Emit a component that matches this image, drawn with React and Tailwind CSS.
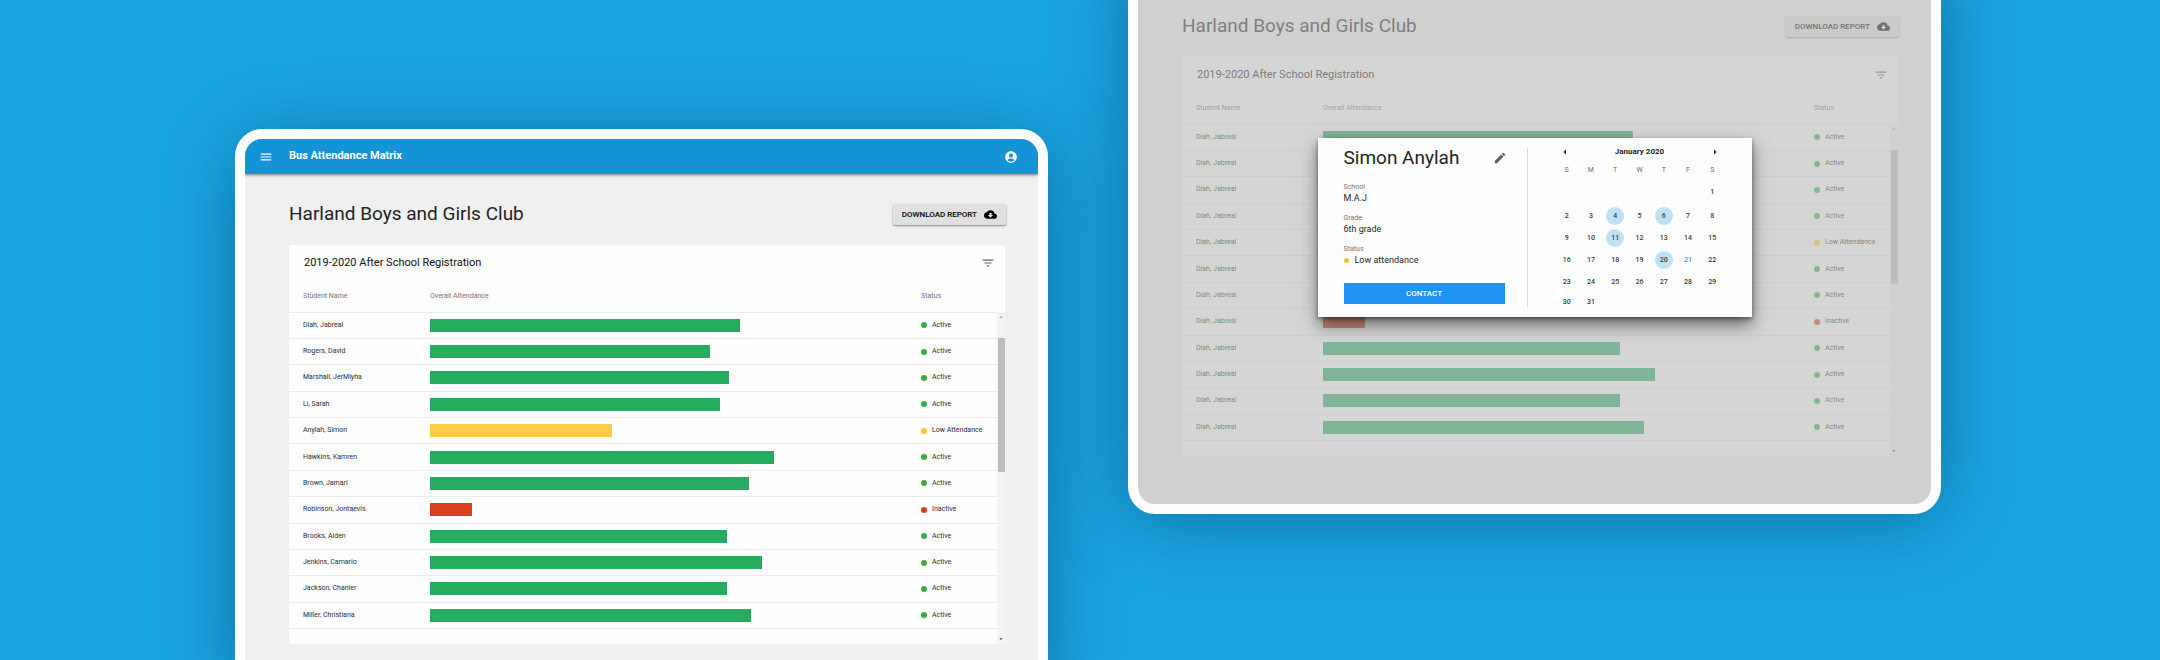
import { MdMenu, MdAccountCircle, MdCloudDownload, MdFilterList, MdEdit, MdArrowDropUp, MdArrowDropDown, MdArrowLeft, MdArrowRight } from "react-icons/md";

const STATUS = {
  Active: { bar: "bg-[#26ac5f]", dot: "bg-[#34b043]" },
  "Low Attendance": { bar: "bg-[#fdcd4a]", dot: "bg-[#fbc536]" },
  Inactive: { bar: "bg-[#d9401c]", dot: "bg-[#dc3c1e]" },
};

const BAR_SCALE = 491;

const STUDENTS = [
  { name: "Diah, Jabreal", value: 310, status: "Active" },
  { name: "Rogers, David", value: 280, status: "Active" },
  { name: "Marshall, JerMiyha", value: 299, status: "Active" },
  { name: "Li, Sarah", value: 290, status: "Active" },
  { name: "Anylah, Simon", value: 182, status: "Low Attendance" },
  { name: "Hawkins, Kamren", value: 344, status: "Active" },
  { name: "Brown, Jamari", value: 319, status: "Active" },
  { name: "Robinson, Jontaevis", value: 42, status: "Inactive" },
  { name: "Brooks, Aiden", value: 297, status: "Active" },
  { name: "Jenkins, Camario", value: 332, status: "Active" },
  { name: "Jackson, Chanler", value: 297, status: "Active" },
  { name: "Miller, Christiana", value: 321, status: "Active" },
];

const PLACEHOLDER_STUDENTS = STUDENTS.map((s) => ({ ...s, name: "Diah, Jabreal" }));

function AppBar() {
  return (
    <header className="relative flex h-[35px] shrink-0 items-center bg-[#1493d6] pl-[14px] pr-5 text-white shadow-[0_1px_3px_rgba(0,0,0,0.5)]">
      <button type="button" aria-label="Menu" className="w-[30px]">
        <MdMenu size={14} />
      </button>
      <h1 className="flex-1 text-[11px] font-bold">Bus Attendance Matrix</h1>
      <button type="button" aria-label="Account">
        <MdAccountCircle size={14} />
      </button>
    </header>
  );
}

function Scrollbar() {
  return (
    <div aria-hidden="true" className="mt-[31px] flex w-2 flex-col items-center bg-[#f3f3f3]">
      <div className="flex h-[26px] justify-center pt-px text-[#8a8a8a]">
        <MdArrowDropUp size={8} />
      </div>
      <div className="h-[134px] w-[7px] bg-[#bdbdbd]" />
      <div className="mt-auto pb-px text-[#333]">
        <MdArrowDropDown size={8} />
      </div>
    </div>
  );
}

function StudentTable({ students }) {
  return (
    <table className="h-[348px] flex-1 table-fixed border-collapse text-left text-[7px] leading-[9px] text-[#2d2d2d]">
      <thead>
        <tr className="h-[31px] border-b border-[#ebebeb] text-[#757575]">
          <th className="w-[141px] pl-[14px] font-normal">Student Name</th>
          <th className="font-normal">Overall Attendance</th>
          <th className="w-[76px] font-normal">Status</th>
        </tr>
      </thead>
      <tbody>
        {students.map((s, i) => (
          <tr key={i} className="border-b border-[#ebebeb]">
            <td className="pl-[14px]">{s.name}</td>
            <td>
              <div
                className={`h-[13px] ${STATUS[s.status].bar}`}
                style={{ width: `${(s.value / BAR_SCALE) * 100}%` }}
              />
            </td>
            <td>
              <span className="flex items-center gap-[5px] whitespace-nowrap">
                <span className={`size-[6px] rounded-full ${STATUS[s.status].dot}`} />
                {s.status}
              </span>
            </td>
          </tr>
        ))}
      </tbody>
    </table>
  );
}

function Dashboard({ students, appBar }) {
  return (
    <>
      {appBar && <AppBar />}
      <main className={`bg-[#f0f0f0] pb-12 pl-11 pr-8 ${appBar ? "pt-[30px]" : "pt-[65px]"}`}>
        <div className="flex h-[21px] items-center justify-between">
          <h2 className="text-[19px] text-[#1f1f1f]">Harland Boys and Girls Club</h2>
          <button
            type="button"
            className="flex h-[21px] items-center gap-[7px] rounded-[2px] bg-[#e0e0e0] px-[9px] text-[8px] font-medium text-black shadow-[0_1px_2px_rgba(0,0,0,0.45)]"
          >
            DOWNLOAD REPORT
            <MdCloudDownload size={13} />
          </button>
        </div>
        <section className="mr-px mt-5 bg-[#fdfdfd]">
          <div className="flex h-9 items-center justify-between pl-[15px] pr-[10px]">
            <h3 className="text-[11px] text-[#111]">2019-2020 After School Registration</h3>
            <button type="button" aria-label="Filter" className="text-[#5f5f5f]">
              <MdFilterList size={14} />
            </button>
          </div>
          <div className="flex">
            <div className="flex flex-1 pb-[15px]">
              <StudentTable students={students} />
            </div>
            <Scrollbar />
          </div>
        </section>
      </main>
    </>
  );
}

function Device({ className = "", children }) {
  return (
    <div
      className={`rounded-[27px] bg-[#fefefe] p-[10px] shadow-[0_8px_80px_rgba(0,40,70,0.42)] ${className}`}
    >
      <div className="relative overflow-hidden rounded-[17px]">{children}</div>
    </div>
  );
}

const WEEKS = [
  ["", "", "", "", "", "", 1],
  [2, 3, 4, 5, 6, 7, 8],
  [9, 10, 11, 12, 13, 14, 15],
  [16, 17, 18, 19, 20, 21, 22],
  [23, 24, 25, 26, 27, 28, 29],
  [30, 31, "", "", "", "", ""],
];
const ROW_HEIGHTS = ["h-[26px]", "h-[22px]", "h-[22px]", "h-[22px]", "h-[22px]", "h-[18px]"];
const MARKED = [4, 6, 11, 20];
const TODAY = 21;

function Calendar() {
  return (
    <div className="flex-1 px-[27px] pt-2">
      <div className="flex h-3 items-center justify-between px-1">
        <button type="button" aria-label="Previous month">
          <MdArrowLeft size={12} />
        </button>
        <h3 className="text-[8px] font-bold">January 2020</h3>
        <button type="button" aria-label="Next month">
          <MdArrowRight size={12} />
        </button>
      </div>
      <table className="mt-[3px] w-full table-fixed text-center text-[7px] leading-[9px]">
        <thead>
          <tr className="h-[18px] text-[#666]">
            {["S", "M", "T", "W", "T", "F", "S"].map((d, i) => (
              <th key={i} className="p-0 font-normal">{d}</th>
            ))}
          </tr>
        </thead>
        <tbody>
          {WEEKS.map((week, w) => (
            <tr key={w} className={ROW_HEIGHTS[w]}>
              {week.map((day, i) => (
                <td key={i} className="p-0">
                  {day !== "" && (
                    <button
                      type="button"
                      className={`mx-auto flex size-[18px] items-center justify-center rounded-full font-medium ${
                        MARKED.includes(day) ? "bg-[#bfe1f4]" : ""
                      } ${day === TODAY ? "text-[#2ba2ec]" : "text-[#3a3a3a]"}`}
                    >
                      {day}
                    </button>
                  )}
                </td>
              ))}
            </tr>
          ))}
        </tbody>
      </table>
    </div>
  );
}

function Field({ label, children }) {
  return (
    <div className="h-[31px]">
      <dt className="text-[7px] leading-[10px] text-[#757575]">{label}</dt>
      <dd className="flex items-center gap-[6px] text-[9px] leading-[13px] text-[#1f1f1f]">{children}</dd>
    </div>
  );
}

function StudentDialog() {
  return (
    <div
      role="dialog"
      aria-label="Simon Anylah"
      className="flex h-[179px] w-[434px] bg-[#fdfdfd] text-[#1f1f1f] shadow-[0_8px_16px_rgba(0,0,0,0.5),0_2px_4px_rgba(0,0,0,0.4)]"
    >
      <div className="flex w-[209px] flex-col pb-[13px] pl-[26px] pr-[22px] pt-2">
        <div className="flex h-6 items-center justify-between">
          <h2 className="text-[19px]">Simon Anylah</h2>
          <button type="button" aria-label="Edit" className="-mr-[2px] text-[#5f5f5f]">
            <MdEdit size={14} />
          </button>
        </div>
        <dl className="mt-3">
          <Field label="School">M.A.J</Field>
          <Field label="Grade">6th grade</Field>
          <Field label="Status">
            <span className="size-[5px] rounded-full bg-[#fbc02d]" />
            Low attendance
          </Field>
        </dl>
        <button type="button" className="mt-auto h-[21px] bg-[#2094f3] text-[8px] font-medium text-white">
          CONTACT
        </button>
      </div>
      <div className="my-[10px] w-px bg-[#dadada]" />
      <Calendar />
    </div>
  );
}

export default function App() {
  return (
    <div className="grid h-screen grid-cols-2 items-start gap-20 overflow-hidden bg-[#1aa6e3] pl-[235px] pr-[219px] font-['Roboto',sans-serif]">
      <Device className="mt-[129px]">
        <Dashboard students={STUDENTS} appBar />
      </Device>
      <Device className="-mt-[59px]">
        <Dashboard students={PLACEHOLDER_STUDENTS} />
        <div className="absolute inset-0 flex items-center justify-center bg-[#bbbbbb]/60">
          <StudentDialog />
        </div>
      </Device>
    </div>
  );
}
